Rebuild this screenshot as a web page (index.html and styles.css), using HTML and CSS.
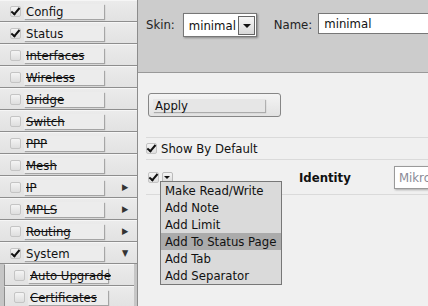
FILE: index.html
```html
<!DOCTYPE html>
<html>
<head>
<meta charset="utf-8">
<title>WebFig skin</title>
<link rel="stylesheet" href="styles.css">
</head>
<body>
<div class="app">
<nav class="menu">
<div class="item"><span class="cb on"></span><span class="label">Config</span></div>
<div class="item"><span class="cb on"></span><span class="label">Status</span></div>
<div class="item off"><span class="cb"></span><span class="label">Interfaces</span></div>
<div class="item off"><span class="cb"></span><span class="label">Wireless</span></div>
<div class="item off"><span class="cb"></span><span class="label">Bridge</span></div>
<div class="item off"><span class="cb"></span><span class="label">Switch</span></div>
<div class="item off"><span class="cb"></span><span class="label">PPP</span></div>
<div class="item off"><span class="cb"></span><span class="label">Mesh</span></div>
<div class="item off"><span class="cb"></span><span class="label">IP</span><span class="arrow">&#9654;</span></div>
<div class="item off"><span class="cb"></span><span class="label">MPLS</span><span class="arrow">&#9654;</span></div>
<div class="item off"><span class="cb"></span><span class="label">Routing</span><span class="arrow">&#9654;</span></div>
<div class="item"><span class="cb on"></span><span class="label">System</span><span class="arrow down">&#9660;</span></div>
<div class="sub">
<div class="item off"><span class="cb"></span><span class="label">Auto Upgrade</span></div>
<div class="item off"><span class="cb"></span><span class="label">Certificates</span></div>
</div>
</nav>
<main class="main">
<div class="top">
<span class="caption">Skin:</span>
<div class="select"><span class="value">minimal</span><span class="drop"></span></div>
<span class="caption name-cap">Name:</span>
<div class="text-input">minimal</div>
</div>
<div class="body">
<div class="apply-row">
<div class="btn"><span>Apply</span></div>
</div>
<div class="row show">
<span class="cb on"></span><span>Show By Default</span>
</div>
<div class="row field">
<div class="ctl"><span class="cb on"></span><span class="mini-drop"></span></div>
<b class="field-name">Identity</b>
<div class="field-input">Mikro</div>
<ul class="popup">
<li>Make Read/Write</li>
<li>Add Note</li>
<li>Add Limit</li>
<li class="hover">Add To Status Page</li>
<li>Add Tab</li>
<li>Add Separator</li>
</ul>
</div>
</div>
</main>
</div>
</body>
</html>
```

FILE: styles.css
```css
html,body{margin:0;padding:0;}
body{width:428px;height:306px;overflow:hidden;background:#f0f0f0;font-family:"DejaVu Sans Condensed","DejaVu Sans",sans-serif;font-size:13px;color:#111;}
.app{display:flex;height:306px;}

/* left menu */
.menu{width:137px;flex:none;border-right:1px solid #8c8c8c;background:#c6c6c6;display:flex;flex-direction:column;overflow:hidden;}
.item{flex:none;height:20px;display:flex;align-items:center;background:linear-gradient(#ebebeb,#e2e2e2);border-top:1px solid #f6f6f6;border-bottom:1px solid #8e8e8e;padding-left:10px;}
.item .label{width:78px;height:15px;line-height:15px;margin-left:3px;padding-left:2px;background:#ececec;box-shadow:1px 1px 1px rgba(0,0,0,.28);white-space:nowrap;}
.off .label{text-decoration:line-through;}
.arrow{margin-left:18px;font-size:9px;color:#333;}
.sub{flex:none;padding:0 3px 0 4px;}
.sub .item{border-left:1px solid #8e8e8e;padding-left:9px;}

/* checkboxes */
.cb{width:9px;height:9px;flex:none;border:1px solid #c4c4c4;border-radius:2px;background:linear-gradient(#f4f4f4,#dedede);position:relative;}
.cb.on::after{content:"";position:absolute;left:2px;top:-1px;width:3px;height:7px;border:solid #111;border-width:0 2px 2px 0;transform:rotate(40deg);}

/* top bar */
.main{flex:1;display:flex;flex-direction:column;min-width:0;}
.top{flex:none;height:73px;box-sizing:border-box;border-bottom:1px solid #999;background:#cccccc;display:flex;align-items:flex-start;padding:13px 0 0 8px;}
.caption{line-height:24px;color:#222;}
.select{margin-left:8px;width:72px;height:22px;border:1px solid #777;background:#fff;box-shadow:1px 1px 2px rgba(0,0,0,.35);display:flex;align-items:center;}
.select .value{padding-left:5px;flex:1;}
.drop{width:15px;height:17px;margin-right:1px;border:1px solid #666;background:linear-gradient(#f6f6f6,#d8d8d8);position:relative;}
.drop::after,.mini-drop::after{content:"";position:absolute;left:4px;top:7px;border:4px solid transparent;border-top:4px solid #111;border-bottom:0;}
.name-cap{margin-left:17px;}
.text-input{margin-left:6px;flex:1;height:19px;line-height:19px;border:1px solid #777;border-right:0;background:#fff;padding-left:5px;}

/* body */
.body{padding-left:8px;}
.apply-row{height:65px;box-sizing:border-box;padding-top:20px;border-bottom:1px solid #dadada;}
.btn{margin-left:2px;width:127px;height:22px;border:1px solid #868686;border-radius:3px;background:linear-gradient(#f4f4f4,#e2e2e2);display:flex;align-items:center;padding-left:4px;}
.btn span{width:110px;height:13px;line-height:13px;padding-left:2px;background:#e6e6e6;box-shadow:1px 1px 1px rgba(0,0,0,.25);}
.row{display:flex;align-items:center;border-bottom:1px solid #dadada;}
.show{height:21px;}
.show .cb{margin-right:4px;}
.field{height:34px;position:relative;}
.ctl{width:153px;display:flex;align-items:center;padding-left:2px;box-sizing:border-box;}
.mini-drop{width:9px;height:9px;margin-left:3px;border:1px solid #bbb;border-radius:2px;background:linear-gradient(#f4f4f4,#dcdcdc);position:relative;}
.mini-drop::after{left:1px;top:3px;border-width:3.5px;}
.field-name{width:95px;}
.field-input{flex:1;height:21px;line-height:21px;border:1px solid #9a9a9a;border-right:0;background:#fff;padding-left:4px;color:#8a8a96;box-shadow:1px 1px 2px rgba(0,0,0,.3);white-space:nowrap;overflow:hidden;}

/* context menu */
.popup{position:absolute;left:14px;top:21px;margin:0;padding:0;width:120px;list-style:none;border:1px solid #777;background:#dadada;}
.popup li{height:17px;line-height:17px;padding-left:4px;white-space:nowrap;}
.popup .hover{background:#ababab;}
```
